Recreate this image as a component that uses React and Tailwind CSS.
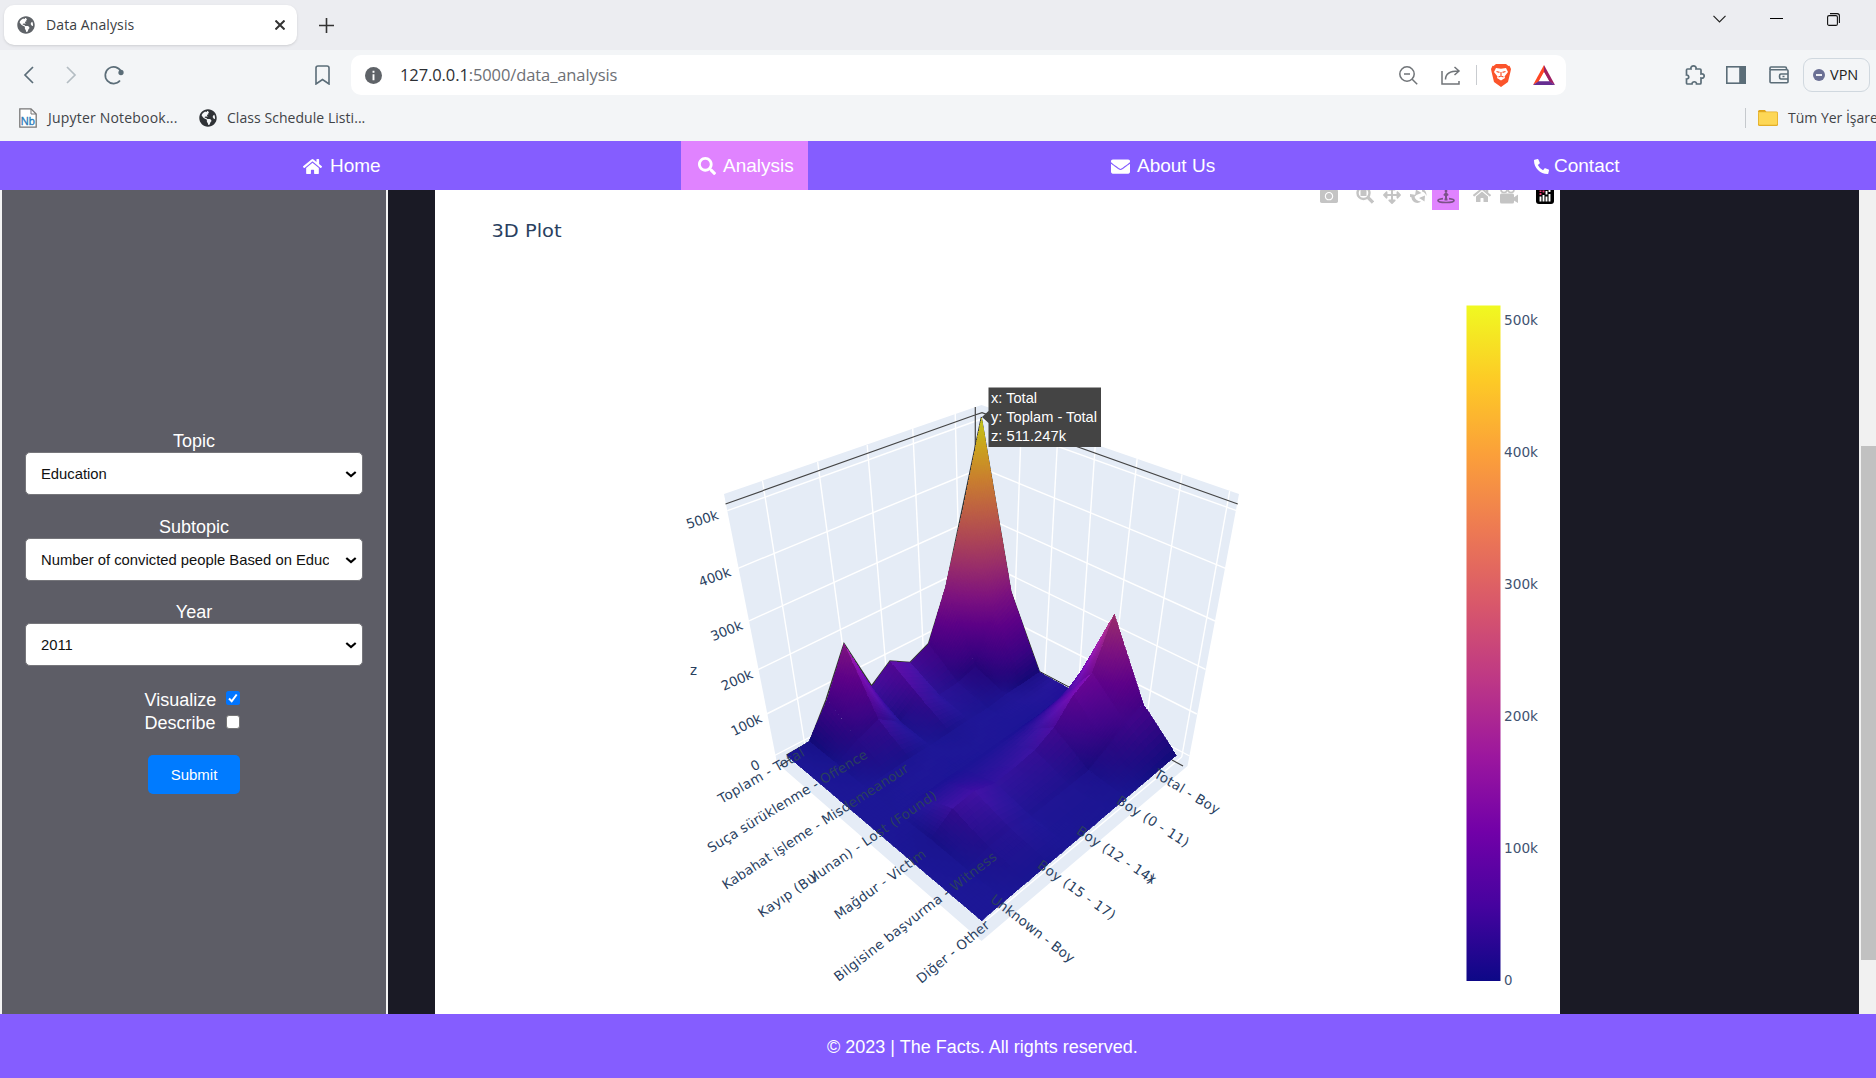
import React from "react";
import { FaHome, FaSearch, FaEnvelope, FaPhoneAlt, FaCamera, FaArrowsAlt, FaGlobeAmericas } from "react-icons/fa";

const PLASMA = [
  [13, 8, 135], [70, 3, 159], [114, 1, 168], [156, 23, 158], [189, 55, 134],
  [216, 87, 107], [237, 121, 83], [251, 159, 58], [253, 202, 38], [240, 249, 33],
];
const Z_MAX = 511.247;
// rows: incident type, columns: age group (values in thousands)
const DATA = [
  [511, 340, 188, 73, 52, 82, 46, 175, 74, 2, 0],
  [169, 138, 33, 20, 17, 42, 9, 45, 27, 1, 0],
  [10, 8, 8, 3, 4, 3, 2, 3, 2, 0, 0],
  [12, 8, 3, 3, 3, 2, 2, 3, 2, 0, 0],
  [233, 127, 104, 56, 34, 27, 24, 40, 36, 2, 0],
  [74, 57, 30, 8, 6, 6, 5, 14, 11, 0, 0],
  [0, 0, 0, 0, 0, 0, 0, 0, 0, 0, 0],
];

function project(u, v, z) {
  const w = 1 - 0.16 * (u + v) - 0.000306 * z;
  return [981.5 + (163.8 * (u - v)) / w, (642.8 - 8.4 * (u + v) - 0.568 * z) / w];
}

function shade(z, g) {
  const t = Math.min(0.9999, Math.max(0, z / Z_MAX)) * 9;
  const i = Math.floor(t);
  const f = t - i;
  const s = Math.tanh(g / 550);
  const m = s < 0 ? 1 + 0.2 * s : 1 + 0.06 * s;
  const add = 15 * (1 - Math.abs(s));
  const c = [0, 1, 2].map((k) => Math.min(255, Math.round((PLASMA[i][k] * (1 - f) + PLASMA[i + 1][k] * f) * m + add)));
  return `rgb(${c[0]},${c[1]},${c[2]})`;
}

function vertexSlope(i, j) {
  const a = Math.max(0, i - 1), b = Math.min(6, i + 1);
  const c = Math.max(0, j - 1), d = Math.min(10, j + 1);
  return ((DATA[b][j] - DATA[a][j]) / (b - a)) * 6 + ((DATA[i][d] - DATA[i][c]) / (d - c)) * 10;
}

function buildSurface() {
  const quads = [];
  const mix = (a, b, c, d, s, t) => a * (1 - s) * (1 - t) + b * s * (1 - t) + c * (1 - s) * t + d * s * t;
  for (let i = 0; i < 6; i++) {
    for (let j = 0; j < 10; j++) {
      const a = DATA[i][j], b = DATA[i + 1][j], c = DATA[i][j + 1], d = DATA[i + 1][j + 1];
      const range = Math.max(a, b, c, d) - Math.min(a, b, c, d);
      const N = range > 200 ? 36 : range > 80 ? 20 : 9;
      const n = [vertexSlope(i, j), vertexSlope(i + 1, j), vertexSlope(i, j + 1), vertexSlope(i + 1, j + 1)];
      for (let p = 0; p < N; p++) {
        for (let q = 0; q < N; q++) {
          const at = (s, t) => project((i + s) / 6, (j + t) / 10, mix(a, b, c, d, s, t));
          const s0 = p / N, s1 = (p + 1) / N, t0 = q / N, t1 = (q + 1) / N;
          const s = (s0 + s1) / 2, t = (t0 + t1) / 2;
          const facet = ((b - a) * (1 - t) + (d - c) * t) * 6 + ((c - a) * (1 - s) + (d - b) * s) * 10;
          const g = 0.5 * facet + 0.5 * mix(n[0], n[1], n[2], n[3], s, t);
          const pts = [at(s0, t0), at(s1, t0), at(s1, t1), at(s0, t1)];
          quads.push({
            depth: (i + s) / 6 + (j + t) / 10,
            fill: shade(mix(a, b, c, d, s, t), g),
            points: pts.map((x) => x[0].toFixed(1) + "," + x[1].toFixed(1)).join(" "),
          });
        }
      }
    }
  }
  return quads.sort((x, y) => x.depth - y.depth);
}
const SURFACE = buildSurface();

const GRID = [
  [727.3, 510.7, 981.5, 419], [981.5, 419, 1236.7, 510.7],
  [738, 568.3, 981.5, 468], [981.5, 468, 1225.6, 568.3],
  [748, 621.3, 981.5, 515.5], [981.5, 515.5, 1215, 621],
  [757.3, 670, 981.5, 561], [981.5, 561, 1205.6, 669.3],
  [766.6, 714, 981.5, 605.8], [981.5, 605.8, 1196.8, 714],
  [773.6, 756, 981.5, 648], [981.5, 648, 1189.7, 756],
  [762.5, 481, 806, 752], [817.6, 461.7, 850, 700], [867.2, 445, 887, 680],
  [912.7, 428.3, 923.5, 655], [955.2, 413.3, 960, 600],
  [1021.5, 420, 1015, 600], [1058, 432, 1044.5, 680], [1095.4, 443, 1079, 680],
  [1137.2, 458.3, 1115, 660], [1182, 474.3, 1147, 715], [1229.7, 491, 1181.7, 757],
  [1181.7, 757, 983, 923],
];

const AXIS_LABELS = [
  ["500k", 688, 529, -18, 33], ["400k", 700.8, 587, -20, 33], ["300k", 713, 641.2, -22, 33],
  ["200k", 723.8, 691, -24, 33], ["100k", 734, 736.2, -27, 32.5], ["0", 753.5, 771.5, -27, 8.5],
  ["z", 690, 675, 0, 7.5],
  ["Toplam - Total", 721.5, 804, -30, 97],
  ["Suça sürüklenme - Offence", 711, 853, -31.3, 184.5],
  ["Kabahat işleme - Misdemeanour", 726, 890, -33, 219],
  ["Kayıp (Bulunan) - Lost (Found)", 762, 918, -34.4, 213],
  ["Mağdur - Victim", 838.5, 920, -35.8, 109],
  ["Bilgisine başvurma - Witness", 838.5, 982, -37.8, 201.5],
  ["Diğer - Other", 921.2, 984, -39.6, 90],
  ["y", 812, 881, -33, 8], ["x", 1146, 880, 35, 8],
  ["Total - Boy", 1153, 776.5, 31, 74],
  ["Boy (0 - 11)", 1115.5, 803, 32.5, 83],
  ["Boy (12 - 14)", 1075.5, 833, 34, 91],
  ["Boy (15 - 17)", 1036.5, 867, 35.4, 92],
  ["Unknown - Boy", 989.5, 901, 37.7, 102],
];

const BAR_TICKS = [["500k", 325], ["400k", 456.8], ["300k", 588.8], ["200k", 720.8], ["100k", 852.7], ["0", 984.7]];

function Plot() {
  return (
    <svg className="block h-[824px] w-[1125px]" viewBox="435 190 1125 824" fontFamily="'DejaVu Sans', sans-serif" fill="#2a3f5f">
      <defs>
        <linearGradient id="bar" x1="0" y1="1" x2="0" y2="0">
          {PLASMA.map((c, i) => <stop key={i} offset={i / 9} stopColor={`rgb(${c.join(",")})`} />)}
        </linearGradient>
      </defs>
      <text x="491.5" y="237" fontSize="18.500" textLength="70" lengthAdjust="spacingAndGlyphs">3D Plot</text>
      <polygon points="724,494 981.5,405 1239,494 1187.5,766 981.5,941 777,763" fill="#e5ecf6" />
      <g stroke="#fff" strokeWidth="1.4">
        {GRID.map((l, i) => <line key={i} x1={l[0]} y1={l[1]} x2={l[2]} y2={l[3]} />)}
      </g>
      <g stroke="#444" strokeWidth="1.2" fill="none">
        <path d="M725.5 504L975 415L982 412.7L1237.8 504M975.3 407V450M1172 760l11 6M780 766l12-8" />
      </g>
      <polyline points="981.5,417 946,587 928.6,643.5 910,662.5 890,661 871.6,686 844,643.5 826,700 809.5,742 786.5,755" fill="none" stroke="#333" strokeWidth="1.4" />
      <polyline points="1069,687 1039.5,671.5 1011,591.5 981.5,418" fill="none" stroke="#222" strokeWidth="1" />
      <g strokeWidth="0.7" shapeRendering="crispEdges">
        {SURFACE.map((q, i) => <polygon key={i} points={q.points} fill={q.fill} stroke={q.fill} />)}
      </g>
      <g fontSize="13.4">
        {AXIS_LABELS.map(([s, x, y, r, w]) => (
          <text key={s} transform={`translate(${x} ${y}) rotate(${r})`} textLength={w}>{s}</text>
        ))}
      </g>
      <rect x="1466.5" y="305.5" width="34" height="675.5" fill="url(#bar)" />
      <g fontSize="13.4" fill="#3f5371">
        {BAR_TICKS.map(([s, y]) => <text key={s} x="1504" y={y} textLength={s === "0" ? 8.5 : 34} lengthAdjust="spacingAndGlyphs">{s}</text>)}
      </g>
      <path d="M982 417L988.5 411V387.5H1101V447H988.5V423Z" fill="#444" />
      <g fill="#fff" fontFamily="'Liberation Sans', Arial, sans-serif" fontSize="14.6">
        <text x="991" y="402.7" textLength="46" lengthAdjust="spacingAndGlyphs">x: Total</text>
        <text x="991" y="421.7" textLength="106" lengthAdjust="spacingAndGlyphs">y: Toplam - Total</text>
        <text x="991" y="440.7" textLength="75" lengthAdjust="spacingAndGlyphs">z: 511.247k</text>
      </g>
    </svg>
  );
}

function Modebar() {
  return (
    <div className="absolute top-[-10px] right-[6px] flex h-[30px] items-center text-[#c4c4c4]">
      <FaCamera className="mr-[18px] h-[18px] w-[18px]" />
      <svg className="mr-[9px] h-[18px] w-[18px]" viewBox="0 0 18 18" fill="none" stroke="currentColor">
        <circle cx="7.500" cy="7" r="6" strokeWidth="2.400" /><path d="M12 11.500l5 5" strokeWidth="3.200" /><path d="M4.500 4h6v6h-6z" fill="currentColor" stroke="none" />
      </svg>
      <FaArrowsAlt className="mr-[9px] h-[18px] w-[18px]" />
      <svg className="mr-[5px] h-[17px] w-[17px]" viewBox="0 0 17 17" fill="currentColor">
        <path d="M0 7l6.500 1-2 1.800c.6 2.600 3 4.700 6.500 4.700-2 1.800-5.500 2-7.800-.3C2 13 1.600 11.800 1.600 10.500L0 9.800z" />
        <path d="M9 11l6-2.500-.5 6-1.800-1.300zM6 2.500L11.500 6 5 8.500zM12 1.500c3 1.300 4.800 4 4.500 7.500C15.500 6.500 14 5 12 4.500z" />
      </svg>
      <div className="mr-[14px] flex h-[30px] w-[27px] items-center justify-center bg-[#e083ff]">
        <svg className="h-[18px] w-[18px]" viewBox="0 0 18 18" fill="none" stroke="#7b5188">
          <path d="M9 0v6" strokeWidth="2.500" /><path d="M9 8.500v5M7 9.500L9 7l2 2.500M7.500 13.500h3" strokeWidth="2" />
          <path d="M6 12.600c-3 .4-5 1-5 1.900 0 1.200 3.500 2 8 2s8-.8 8-2c0-.9-2-1.500-5-1.900" strokeWidth="1.700" />
        </svg>
      </div>
      <FaHome className="mr-[9px] h-[18px] w-[18px]" />
      <svg className="mr-[18px] h-[18px] w-[18px]" viewBox="0 0 18 18" fill="currentColor">
        <circle cx="4" cy="3.500" r="3" fill="none" stroke="currentColor" strokeWidth="1.600" /><circle cx="11" cy="3.500" r="3" fill="none" stroke="currentColor" strokeWidth="1.600" />
        <rect y="7.500" width="14" height="10" rx="1.500" /><path d="M13 12l5-3.500v8.500l-5-3z" />
      </svg>
      <svg className="h-[18px] w-[18px]" viewBox="0 0 18 18">
        <rect width="18" height="18" rx="3" fill="#000" />
        <path d="M4.500 10.500v5M7.500 9v6.500M10.500 10.500v5M13.500 8v7.500M10.500 5v3.500M13.500 4v2" stroke="#fff" strokeWidth="1.900" />
        <path d="M4.500 4.500v1.500M4.500 7v2M7.500 4.500v2" stroke="#e8346f" strokeWidth="1.900" />
      </svg>
    </div>
  );
}

function Select({ children }) {
  return (
    <div className="relative top-[-1px] flex h-[43px] w-[338px] items-center rounded-[5px] border border-[#76767b] bg-white pt-px pl-[15px] text-[14.8px] text-[#111]">
      <span className="w-[288px] overflow-hidden whitespace-nowrap">{children}</span>
      <svg className="ml-[16px] h-3 w-3" viewBox="0 0 12 12" fill="none" stroke="#000" strokeWidth="2.200"><path d="M1.300 4l4.700 4 4.700-4" /></svg>
    </div>
  );
}

function Sidebar() {
  return (
    <aside className="flex h-full w-[388px] flex-col items-center border-x-2 border-[#f4f4f4] bg-[#5d5d66] pt-[240px] text-[18px] leading-[23px] text-white">
      <div>Topic</div>
      <Select>Education</Select>
      <div className="mt-5">Subtopic</div>
      <Select>Number of convicted people Based on Education</Select>
      <div className="mt-[19px]">Year</div>
      <Select>2011</Select>
      <div className="mt-[22px] mr-[4px] flex w-[95px] items-center justify-between">
        Visualize
        <svg className="mb-[5px] h-[14px] w-[14px]" viewBox="0 0 14 14"><rect width="14" height="14" rx="2.500" fill="#0075ff" /><path d="M3 7.500l2.700 2.800 5-6.800" fill="none" stroke="#fff" strokeWidth="2" /></svg>
      </div>
      <div className="mr-[4px] flex w-[95px] items-center justify-between">
        Describe
        <span className="mb-1 h-[14px] w-[14px] rounded-[3px] border border-[#767676] bg-white" />
      </div>
      <div className="mt-[20px] flex h-[39px] w-[92px] items-center justify-center rounded-[5px] bg-[#007bff] text-[15px]">Submit</div>
    </aside>
  );
}

const chromeFont = "font-['Open_Sans','Noto_Sans',sans-serif]";

function Browser() {
  return (
    <header className={`h-[141px] bg-[#f3f5f7] text-[#3b3e43] ${chromeFont}`}>
      <div className="flex h-[50px] items-center bg-[#ecedf1] pl-1">
        <div className="flex h-10 w-[293px] items-center rounded-[10px] bg-white pl-[13px] shadow-sm">
          <FaGlobeAmericas className="h-[18px] w-[18px] text-[#5f6368]" />
          <span className="mb-0.5 ml-[11px] text-[14px] tracking-[0.100px]">Data Analysis</span>
          <svg className="mr-[12px] ml-auto h-[10px] w-[10px]" viewBox="0 0 10 10" stroke="#333" strokeWidth="2"><path d="M.5.5l9 9M9.500.5l-9 9" /></svg>
        </div>
        <svg className="ml-[22px] h-[15px] w-[15px]" viewBox="0 0 15 15" stroke="#333" strokeWidth="1.600"><path d="M7.500 0v15M0 7.500h15" /></svg>
        <svg className="mb-3 ml-auto h-2 w-[13px]" viewBox="0 0 13 8" fill="none" stroke="#222" strokeWidth="1.200"><path d="M.5.8l6 6 6-6" /></svg>
        <div className="mb-[13px] ml-11 h-px w-[13px] bg-black" />
        <svg className="mr-[36px] mb-[12px] ml-[44px] h-[13px] w-[13px]" viewBox="0 0 13 13" fill="none" stroke="#111" strokeWidth="1.100"><rect x=".6" y="2.600" width="9.800" height="9.800" rx="1.500" /><path d="M3 .6h7.200q2.200 0 2.200 2.200V10" /></svg>
      </div>
      <div className="flex h-[50px] items-center">
        <svg className="ml-[23px] h-[18px] w-[11px]" viewBox="0 0 11 18" fill="none" stroke="#5b6d78" strokeWidth="1.700"><path d="M10 1L2 9l8 8" /></svg>
        <svg className="ml-[32px] h-[18px] w-[11px]" viewBox="0 0 11 18" fill="none" stroke="#b4bdc3" strokeWidth="1.700"><path d="M1 1l8 8-8 8" /></svg>
        <svg className="ml-[27px] h-[20px] w-[20px]" viewBox="0 0 20 20" fill="none" stroke="#5b6d78" strokeWidth="1.700"><path d="M16 15.500A8.300 8.300 0 1 1 17 6.500" /><circle cx="17" cy="7.500" r="1.800" fill="#5b6d78" /></svg>
        <svg className="ml-[191px] h-[20px] w-[15px]" viewBox="0 0 15 20" fill="none" stroke="#5b6d78" strokeWidth="1.600"><path d="M1 3q0-2 2-2h9q2 0 2 2v16l-6.500-4.500L1 19z" /></svg>
        <div className="ml-[21px] flex h-10 w-[1215px] items-center rounded-[10px] bg-white pl-[14px]">
          <svg className="h-[17px] w-[17px]" viewBox="0 0 17 17"><circle cx="8.500" cy="8.500" r="8.500" fill="#5f6368" /><path d="M8.500 3.800v2M8.500 7.200v6" stroke="#fff" strokeWidth="1.900" /></svg>
          <span className="ml-[18px] text-[16.500px] tracking-[-0.100px] text-[#6d7075]"><span className="text-[#2c2f33]">127.0.0.1</span>:5000/data_analysis</span>
          <svg className="ml-auto h-[19px] w-[19px]" viewBox="0 0 19 19" fill="none" stroke="#707478" strokeWidth="1.500"><circle cx="8" cy="8" r="7.200" /><path d="M13.200 13.200l5 5M5 8h6" /></svg>
          <svg className="ml-[23px] h-[19px] w-[20px]" viewBox="0 0 20 19" fill="none" stroke="#707478" strokeWidth="1.500"><path d="M1 5v13h17v-3M4.500 13.500c0-5 4-8.500 13-8.500M13.500 1l4.500 4-4.500 4" /></svg>
          <div className="ml-[15px] h-5 w-px bg-[#c9ccd0]" />
          <svg className="ml-[14px] h-[23px] w-[20px]" viewBox="0 0 20 23"><path d="M5 0h10l2.500 2 1-.3L20 5l-.6 3-2.400 10-7 5-7-5L.6 8 0 5l1.500-3.300 1 .3z" fill="#fb542b" /><path d="M5 4l5 .8L15 4l2 4-3.500 4.500.5 1.500-4 2.500-4-2.500.5-1.500L3 8z" fill="#fff" /><path d="M5.500 7.500l3 .8M14.500 7.500l-3 .8M10 8v4M7.500 13l2.500-1 2.500 1" stroke="#fb542b" strokeWidth="1.200" fill="none" /></svg>
          <svg className="mr-[11px] ml-[22px] h-[20px] w-[22px]" viewBox="0 0 22 20"><path d="M11 0L0 20l6-3.500 5-9z" fill="#ff4724" /><path d="M11 0l11 20-6-3.500-5-9z" fill="#9e1f63" /><path d="M0 20h22l-6-4H6z" fill="#662d91" /><path d="M11 7l-5.200 9.200h10.400z" fill="#fff" /></svg>
        </div>
        <svg className="ml-auto h-[20px] w-[20px]" viewBox="0 0 20 20" fill="none" stroke="#5b6d78" strokeWidth="1.700"><path d="M1.500 5Q1.500 4 2.500 4H6C5.500 1.500 7 .9 8.500.9S11.500 1.500 11 4h4q1 0 1 1v4c2-.5 3.200.5 3.200 2S18 13.500 16 13v5q0 1-1 1h-3.500c.3-3-4.700-3-4.500 0H2.500q-1 0-1-1v-4c3 .3 3-4.300 0-4z" /></svg>
        <svg className="ml-[21px] h-[18px] w-[20px]" viewBox="0 0 20 18" fill="none" stroke="#5b6d78" strokeWidth="1.600"><rect x=".8" y=".8" width="18.400" height="16.400" /><rect x="14" y="1" width="5" height="16" fill="#5b6d78" /></svg>
        <svg className="ml-[23px] h-[18px] w-[20px]" viewBox="0 0 20 18" fill="none" stroke="#5b6d78" strokeWidth="1.600"><rect x="1" y="3.800" width="18" height="13" rx="1" /><path d="M1 4V2q0-1 1-1h14q1.500 0 1.500 1.500V4M19 8h-7q-1.500 0-1.500 2.500T12 13h7M13.500 10.500h2" /></svg>
        <div className="mr-[6px] ml-[14px] flex h-[34px] w-[67px] items-center rounded-[9px] border border-[#d0d8df] pl-[9px] text-[14.500px] text-[#222]">
          <svg className="mr-[5px] h-3 w-3" viewBox="0 0 12 12"><circle cx="6" cy="6" r="6" fill="#6b7094" /><path d="M3 6h6" stroke="#fff" strokeWidth="1.800" /></svg>
          VPN
        </div>
      </div>
      <div className="flex h-[35px] items-center pl-[19px] text-[14px] text-[#3f4347]">
        <svg className="h-[20px] w-[18px]" viewBox="0 0 18 20"><path d="M.8.8H12L17.200 6v13.200H.8z" fill="#fff" stroke="#777" strokeWidth="1.300" /><path d="M12 1v5h5" fill="none" stroke="#777" /><text x="1.800" y="16.500" fontSize="11" fontFamily="'Liberation Sans'" fill="#2a7ab8" stroke="#2a7ab8" strokeWidth=".3">Nb</text></svg>
        <span className="mb-px ml-[11px] w-[131px] tracking-[0.200px] whitespace-nowrap">Jupyter Notebook...</span>
        <FaGlobeAmericas className="ml-[20px] h-[18px] w-[18px] text-[#2f3236]" />
        <span className="mb-px ml-[10px] tracking-[0.050px] whitespace-nowrap">Class Schedule Listi...</span>
        <div className="ml-auto h-5 w-px bg-[#c5c9cd]" />
        <svg className="ml-[12px] h-4 w-5" viewBox="0 0 20 16"><path d="M0 1.500Q0 0 1.500 0H7l1.500 2H0z" fill="#e0a419" /><rect y="1.500" width="20" height="14.500" rx="1.500" fill="#e3ae28" /><rect x=".8" y="2.200" width="18.400" height="12.600" rx="1" fill="#fdd756" /></svg>
        <span className="mb-px ml-[10px] w-[88px] whitespace-nowrap">Tüm Yer İşare</span>
      </div>
    </header>
  );
}

function Nav() {
  return (
    <nav className="flex h-[49px] items-center bg-[#855dff] text-[19px] text-white">
      <a className="ml-[303px] flex w-[80px] items-center pt-px whitespace-nowrap"><FaHome className="mr-2 h-[19px] w-[19px] shrink-0" />Home</a>
      <a className="ml-[298px] flex h-full w-[127px] items-center bg-[#e083ff] pt-px pl-[17px]"><FaSearch className="mr-[7px] h-[18px] w-[18px]" />Analysis</a>
      <a className="ml-[303px] flex w-[110px] items-center pt-px whitespace-nowrap"><FaEnvelope className="mr-[7px] h-[19px] w-[19px] shrink-0" />About Us</a>
      <a className="ml-[313px] flex items-center pt-px"><FaPhoneAlt className="mr-[5px] h-[15px] w-[15px]" />Contact</a>
    </nav>
  );
}

export default function App() {
  return (
    <div className="flex h-[1078px] w-[1876px] flex-col overflow-hidden bg-white font-['Liberation_Sans',Arial,sans-serif]">
      <Browser />
      <Nav />
      <main className="flex h-[824px] bg-[#1a1a25]">
        <Sidebar />
        <section className="relative ml-[47px] h-full w-[1125px] overflow-hidden bg-white">
          <Plot />
          <Modebar />
        </section>
        <div className="ml-auto h-full w-[17px] bg-[#f1f1f1] pt-[256px] pl-[2px]">
          <div className="h-[514px] bg-[#c1c1c1]" />
        </div>
      </main>
      <footer className="flex h-16 items-center bg-[#855dff] pt-0.5 pl-[827px] text-[18px] text-white">© 2023 | The Facts. All rights reserved.</footer>
    </div>
  );
}
